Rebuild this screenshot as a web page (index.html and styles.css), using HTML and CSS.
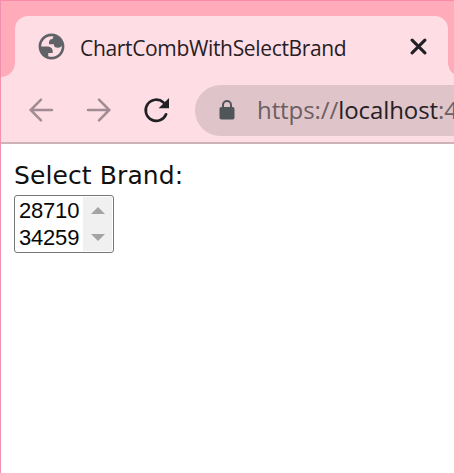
FILE: index.html
```html
<!DOCTYPE html>
<html lang="en">
<head>
<meta charset="utf-8">
<title>ChartCombWithSelectBrand</title>
<link rel="stylesheet" href="styles.css">
</head>
<body>
<div class="window">
  <header class="tabstrip">
    <div class="tab">
      <svg class="globe" viewBox="0 0 24 24"><path d="M12 2C6.48 2 2 6.48 2 12s4.48 10 10 10 10-4.48 10-10S17.52 2 12 2zM4 12h4.400c3.407.022 4.922 1.730 4.543 5.127H9.488v2.470a8.004 8.004 0 0 0 10.498-8.083C19.327 12.504 18.332 13 17 13c-2.137 0-3.206-.916-3.206-2.750h-3.748c-.274-2.728.683-4.092 2.870-4.092 0-.975.327-1.597.811-1.970A8.004 8.004 0 0 0 4 12z"/></svg>
      <span class="title">ChartCombWithSelectBrand</span>
      <svg class="close" viewBox="0 0 16 16"><path d="M2 2l12 12M14 2L2 14"/></svg>
    </div>
  </header>
  <nav class="toolbar">
    <svg class="arrow" viewBox="0 0 26 26"><path d="M24 13H3M13 2.700L2.700 13L13 23.300"/></svg>
    <svg class="arrow" viewBox="0 0 26 26"><path d="M2 13H23M13 2.700L23.300 13L13 23.300"/></svg>
    <svg class="reload" viewBox="0 0 28 28"><path class="ring" d="M24.100 18.300A10.600 10.600 0 1 1 21.500 6.500"/><path class="head" d="M27 2V12.300H16.600Z"/></svg>
    <div class="address">
      <svg class="lock" viewBox="0 0 16 20"><rect x="0.500" y="7" width="15" height="12.500" rx="1.800"/><path d="M4 8V5a4 4 0 0 1 8 0V8"/></svg>
      <span class="url">https://<b>localhost</b>:4</span>
    </div>
  </nav>
  <main class="page">
    <div class="label">Select Brand:</div>
    <div class="listbox">
      <div class="options"><div>28710</div><div>34259</div></div>
      <div class="scrollbar">
        <svg viewBox="0 0 14 7"><path d="M0 7L7 0L14 7Z"/></svg>
        <svg viewBox="0 0 14 7"><path d="M0 0L7 7L14 0Z"/></svg>
      </div>
    </div>
  </main>
</div>
</body>
</html>
```
FILE: styles.css
```css
* { box-sizing: border-box; }
body { margin: 0; background: #fff; overflow: hidden; }
svg { display: block; flex: none; }
.window {
  width: 454px; height: 473px; overflow: hidden;
  border-top: 1px solid #fb8aaa; border-left: 1px solid #f191ae;
}
.tabstrip { height: 76px; padding: 15px 6px 0 14px; background: #ffabb9; }
.tab {
  position: relative; display: flex; align-items: center;
  width: 433px; height: 61px; padding: 0 21px 0 21px;
  background: #ffdde4; border-radius: 13px 13px 0 0;
}
.tab::before, .tab::after {
  content: ""; position: absolute; bottom: 0; width: 14px; height: 14px;
}
.tab::before { left: -14px; background: radial-gradient(circle at 0 0, #ffabb9 13.500px, #ffdde4 14.200px); }
.tab::after { right: -14px; background: radial-gradient(circle at 100% 0, #ffabb9 13.500px, #ffdde4 14.200px); }
.globe { width: 31px; height: 31px; fill: #5f6368; fill-rule: evenodd; }
.title {
  margin-left: 13px; width: 325px; white-space: nowrap;
  font: 21px/30px "Open Sans", sans-serif; color: #262024;
  letter-spacing: -0.340px; padding-top: 2px;
}
.close { width: 17px; height: 17px; margin-left: auto; }
.close path { fill: none; stroke: #202124; stroke-width: 2.900; stroke-linecap: round; }
.toolbar {
  display: flex; align-items: center; height: 67px; padding: 1px 0 0 27px;
  background: #ffdde4; border-bottom: 2px solid #cdb2b9;
}
.arrow { width: 26px; height: 26px; margin-right: 32px; }
.arrow path { fill: none; stroke: #a08c92; stroke-width: 2.500; stroke-linecap: round; }
.reload { width: 28px; height: 28px; margin-left: -2px; }
.ring { fill: none; stroke: #202124; stroke-width: 2.700; stroke-linecap: round; }
.head { fill: #202124; }
.address {
  display: flex; align-items: center; flex: none;
  width: 260px; height: 51px; margin-left: 25px; padding-left: 24px;
  background: #dfc5ca; border-radius: 26px 0 0 26px;
}
.lock { width: 16px; height: 20px; }
.lock rect { fill: #505559; }
.lock path { fill: none; stroke: #505559; stroke-width: 2; }
.url {
  margin-left: 22px; white-space: nowrap; color: #6b5f64;
  font: 24px/36px "Open Sans", sans-serif; letter-spacing: -0.080px;
}
.url b { font-weight: 400; color: #262024; }
.page { padding: 15px 13px; background: #fff; }
.label { font: 25px/34px "DejaVu Sans", sans-serif; color: #111; white-space: nowrap; letter-spacing: 0.100px; }
.listbox {
  display: flex; width: 100px; height: 58px; margin-top: 2px; padding: 1px;
  border: 1px solid #767676; border-radius: 3px;
}
.options { width: 67px; padding-left: 3px; font: 22px/27px "Liberation Sans", sans-serif; letter-spacing: -0.200px; color: #080808; }
.scrollbar {
  display: flex; flex-direction: column; align-items: center; justify-content: space-between;
  flex: 1; padding: 10px 0; background: #f0f0f0;
}
.scrollbar svg { width: 14px; height: 7px; fill: #a3a3a3; }
```
